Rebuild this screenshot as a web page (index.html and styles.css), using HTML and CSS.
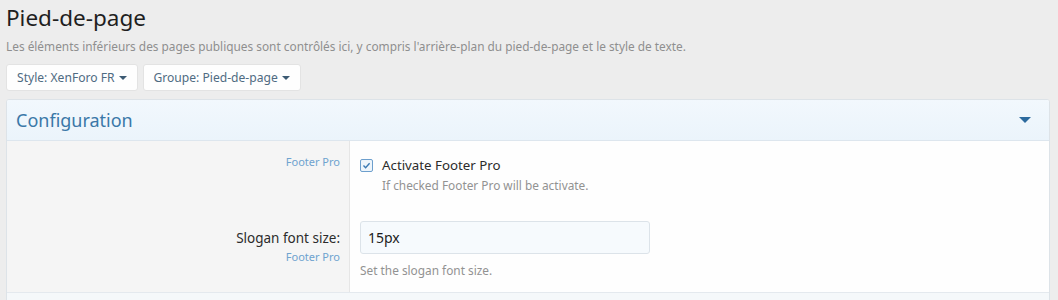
FILE: index.html
```html
<!DOCTYPE html>
<html>
    <head>
        <meta charset="utf-8">
        <title>Pied-de-page</title>
        <link rel="stylesheet" href="styles.css">
    </head>
    <body>
        <div class="page">
            <h1 class="title">Pied-de-page</h1>
            <div class="desc">Les éléments inférieurs des pages publiques sont contrôlés ici, y compris l'arrière-plan du pied-de-page et le style de texte.</div>
            <div class="filters">
                <span class="filter">Style: XenForo FR <i class="caret"></i></span>
                <span class="filter">Groupe: Pied-de-page <i class="caret"></i></span>
            </div>
            <div class="block">
                <div class="block-header">
                    <h2>Configuration</h2>
                    <i class="toggle"></i>
                </div>
                <div class="row row-first">
                    <div class="row-label">
                        <div class="addon">Footer Pro</div>
                    </div>
                    <div class="row-input">
                        <label class="check">
                            <span class="box">
                                <svg width="9" height="9" viewBox="0 0 9 9"><path d="M1.5 4.6 L3.6 6.7 L7.6 2.3" fill="none" stroke="#3a79b3" stroke-width="1.4"/></svg>
                            </span>
                            Activate Footer Pro
                        </label>
                        <div class="hint hint-check">If checked Footer Pro will be activate.</div>
                    </div>
                </div>
                <div class="row row-second">
                    <div class="row-label">
                        <div class="label">Slogan font size:</div>
                        <div class="addon">Footer Pro</div>
                    </div>
                    <div class="row-input">
                        <input type="text" class="text-input" value="15px">
                        <div class="hint">Set the slogan font size.</div>
                    </div>
                </div>
                <div class="block-footer"></div>
            </div>
        </div>
    </body>
</html>
```

FILE: styles.css
```css
*{
    margin: 0;
    padding: 0;
    box-sizing: border-box;
}
body{
    font-family: 'Noto Sans', 'Open Sans', sans-serif;
    font-size: 14px;
    color: #222;
    background-color: #ededed;
    overflow: hidden;
}
.page{
    padding: 0 8px 0 6px;
}
.title{
    font-size: 22.5px;
    font-weight: normal;
    line-height: 34px;
    color: #1f1f1f;
    padding-top: 1px;
}
.desc{
    font-size: 11.85px;
    line-height: 18px;
    color: #8f8f8f;
    margin-top: 2px;
}
.filters{
    display: flex;
    gap: 5px;
    margin-top: 9px;
}
.filter{
    display: inline-flex;
    align-items: center;
    height: 27px;
    padding: 0 10px;
    background-color: #fefefe;
    border: 1px solid #e3e3e3;
    border-radius: 3px;
    font-size: 12.1px;
    color: #4f6b82;
}
.caret{
    display: inline-block;
    margin-left: 4px;
    border-left: 4px solid transparent;
    border-right: 4px solid transparent;
    border-top: 4px solid #3c5a73;
}
.block{
    margin-top: 8px;
    border: 1px solid #dde3e8;
    border-radius: 3px;
    background-color: #fefefe;
    overflow: hidden;
}
.block-header{
    display: flex;
    justify-content: space-between;
    align-items: center;
    height: 41px;
    padding: 0 18px 0 9px;
    background: linear-gradient(#f2f8fd, #ebf4fb);
    border-bottom: 1px solid #dde6ee;
}
.block-header h2{
    font-size: 18px;
    font-weight: normal;
    color: #3b78a8;
}
.toggle{
    display: inline-block;
    border-left: 6px solid transparent;
    border-right: 6px solid transparent;
    border-top: 6px solid #2c6a9e;
}
.row{
    display: grid;
    grid-template-columns: 343px 1fr;
}
.row-label{
    background-color: #f5f5f5;
    border-right: 1px solid #e6e6e6;
    text-align: right;
    padding: 0 9px 0 10px;
}
.row-input{
    padding: 0 10px;
}
.row-first .row-label{
    padding-top: 13px;
    padding-bottom: 13px;
}
.row-first .row-input{
    padding-top: 14px;
    padding-bottom: 12px;
}
.row-second .row-label{
    padding-top: 22px;
}
.row-second .row-input{
    padding-top: 15px;
    padding-bottom: 13px;
}
.addon{
    font-size: 11px;
    line-height: 16px;
    color: #6fa3cf;
}
.row-second .addon{
    margin-top: 1px;
}
.label{
    font-size: 13.5px;
    line-height: 20px;
    color: #2b2b2b;
}
.check{
    display: flex;
    align-items: center;
    font-size: 13.3px;
    line-height: 20px;
    color: #2b2b2b;
}
.box{
    display: inline-flex;
    align-items: center;
    justify-content: center;
    width: 13px;
    height: 13px;
    margin: 0 9px 0 0;
    border: 1.5px solid #6d9fcd;
    border-radius: 2px;
    background-color: #eef5fb;
}
.hint{
    font-size: 11.85px;
    line-height: 18px;
    color: #929292;
    margin-top: 7px;
}
.hint-check{
    margin-top: 1px;
    padding-left: 22px;
}
.text-input{
    display: block;
    width: 290px;
    height: 33px;
    padding: 0 7px;
    font-family: inherit;
    font-size: 14px;
    color: #1c1c1c;
    background-color: #f6fafd;
    border: 1px solid #dce3e9;
    border-radius: 3px;
    outline: none;
}
.block-footer{
    height: 12px;
    background-color: #f5f8fa;
    border-top: 1px solid #e4e9ee;
}
```
